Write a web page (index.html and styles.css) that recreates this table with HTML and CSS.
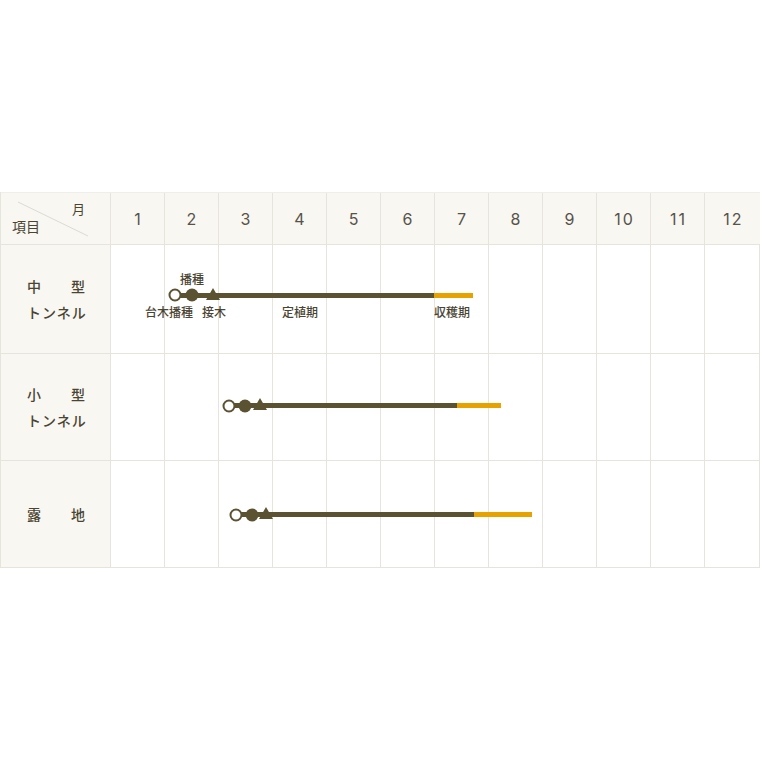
FILE: index.html
```html
<!DOCTYPE html>
<html lang="ja">
<head>
<meta charset="utf-8">
<link rel="stylesheet" href="styles.css">
</head>
<body>
<div class="page">
  <div class="chart">
    <div class="row head">
      <div class="corner">
        <svg class="diag" width="110" height="53" viewBox="0 0 110 53"><line x1="18" y1="9" x2="88" y2="43" stroke="#dcdad2" stroke-width="1"/></svg>
        <span class="c-month">月</span>
        <span class="c-item">項目</span>
      </div>
      <div class="m">1</div><div class="m">2</div><div class="m">3</div><div class="m">4</div>
      <div class="m">5</div><div class="m">6</div><div class="m">7</div><div class="m">8</div>
      <div class="m">9</div><div class="m">10</div><div class="m">11</div><div class="m">12</div>
    </div>

    <div class="row r1">
      <div class="label"><span class="l1">中<i></i>型</span><span class="l2">トンネル</span></div>
      <div class="cell"></div><div class="cell"></div><div class="cell"></div><div class="cell"></div>
      <div class="cell"></div><div class="cell"></div><div class="cell"></div><div class="cell"></div>
      <div class="cell"></div><div class="cell"></div><div class="cell"></div><div class="cell"></div>
      <div class="track">
        <div class="bar dark" style="left:65px;width:259px"></div>
        <div class="bar orange" style="left:324px;width:39px"></div>
        <div class="open" style="left:65px"></div>
        <div class="dot" style="left:82px"></div>
        <div class="tri" style="left:103px"></div>
        <span class="tl above" style="left:82px">播種</span>
        <span class="tl below" style="left:59px">台木播種</span>
        <span class="tl below" style="left:104px">接木</span>
        <span class="tl below" style="left:190px">定植期</span>
        <span class="tl below" style="left:342px">収穫期</span>
      </div>
    </div>

    <div class="row r2">
      <div class="label"><span class="l1">小<i></i>型</span><span class="l2">トンネル</span></div>
      <div class="cell"></div><div class="cell"></div><div class="cell"></div><div class="cell"></div>
      <div class="cell"></div><div class="cell"></div><div class="cell"></div><div class="cell"></div>
      <div class="cell"></div><div class="cell"></div><div class="cell"></div><div class="cell"></div>
      <div class="track">
        <div class="bar dark" style="left:119px;width:228px"></div>
        <div class="bar orange" style="left:347px;width:44px"></div>
        <div class="open" style="left:119px"></div>
        <div class="dot" style="left:135px"></div>
        <div class="tri" style="left:150px"></div>
      </div>
    </div>

    <div class="row r3">
      <div class="label"><span class="l1">露<i></i>地</span></div>
      <div class="cell"></div><div class="cell"></div><div class="cell"></div><div class="cell"></div>
      <div class="cell"></div><div class="cell"></div><div class="cell"></div><div class="cell"></div>
      <div class="cell"></div><div class="cell"></div><div class="cell"></div><div class="cell"></div>
      <div class="track">
        <div class="bar dark" style="left:126px;width:238px"></div>
        <div class="bar orange" style="left:364px;width:58px"></div>
        <div class="open" style="left:126px"></div>
        <div class="dot" style="left:142px"></div>
        <div class="tri" style="left:156px"></div>
      </div>
    </div>
  </div>
</div>
</body>
</html>
```
FILE: styles.css
```css
* { box-sizing: border-box; }
html, body { margin: 0; padding: 0; background: #fff; }
body { font-family: "Noto Sans CJK JP", "Noto Sans", sans-serif; color: #4a4433; }
.page { width: 760px; height: 760px; padding-top: 192px; }
.chart { width: 760px; border-left: 1px solid #e6e4dc; }
.row {
  display: grid;
  grid-template-columns: 110px repeat(11, 54px) 55px;
  position: relative;
  border-bottom: 1px solid #e6e4dc;
}
.head { height: 53px; background: #f8f7f2; border-top: 1px solid #efeee8; }
.r1 { height: 109px; }
.r2 { height: 107px; }
.r3 { height: 107px; }
.corner { position: relative; border-right: 1px solid #e6e4dc; }
.diag { position: absolute; left: -1px; top: 0; }
.c-month { position: absolute; left: 71px; top: 6px; font-size: 13px; }
.c-item { position: absolute; left: 11px; top: 23px; font-size: 14px; }
.m {
  display: flex; align-items: center; justify-content: center;
  border-right: 1px solid #e6e4dc;
  font-family: "Inter", "Noto Sans", sans-serif;
  font-size: 16px; color: #57524a; letter-spacing: 2px;
  padding-left: 2px;
}
.m:last-child { border-right: none; }
.label {
  background: #f8f7f2;
  border-right: 1px solid #e6e4dc;
  display: flex; flex-direction: column; justify-content: center; align-items: flex-start;
  padding-left: 26px; gap: 6px;
  font-size: 14px; font-weight: 500;
}
.l1 { display: flex; width: 58px; justify-content: space-between; }
.l1 i { flex: 1; }
.l2 { letter-spacing: 1px; }
.cell { border-right: 1px solid #e6e4dc; }
.cell:last-of-type { border-right: none; }
.track { position: absolute; left: 109px; top: 0; right: 0; bottom: 0; }
.bar { position: absolute; height: 5px; }
.r1 .bar { top: 48px; }
.r2 .bar { top: 49px; }
.r3 .bar { top: 51px; }
.dark { background: #5b5232; }
.orange { background: #e8a200; }
.open, .dot { position: absolute; width: 13px; height: 13px; border-radius: 50%; transform: translate(-50%, -50%); }
.open { background: #fff; border: 2.5px solid #5b5232; }
.dot { background: #5b5232; }
.r1 .open, .r1 .dot { top: 50px; }
.r2 .open, .r2 .dot { top: 51.5px; }
.r3 .open, .r3 .dot { top: 53.5px; }
.tri {
  position: absolute; width: 0; height: 0;
  border-left: 7.5px solid transparent; border-right: 7.5px solid transparent;
  border-bottom: 12px solid #5b5232;
  transform: translateX(-50%);
}
.r1 .tri { top: 43px; }
.r2 .tri { top: 44px; }
.r3 .tri { top: 46px; }
.tl { position: absolute; font-size: 12px; font-weight: 500; transform: translateX(-50%); white-space: nowrap; color: #4a4433; line-height: 1; }
.tl.above { top: 28px; }
.tl.below { top: 61px; }
```
